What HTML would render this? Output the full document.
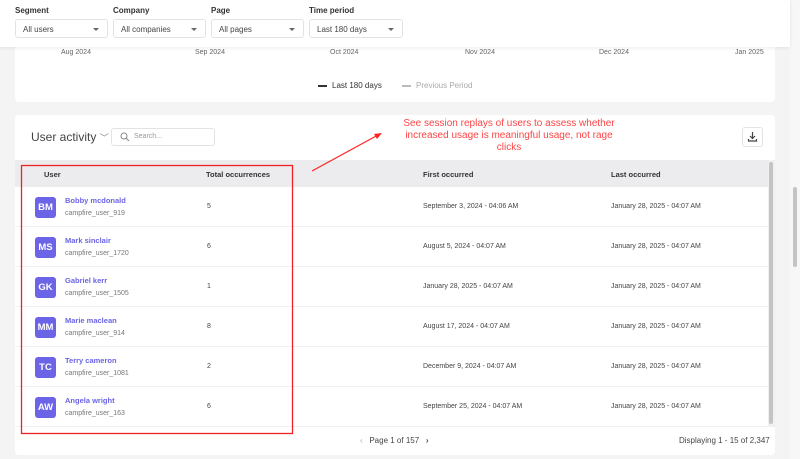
<!DOCTYPE html>
<html><head><style>
*{box-sizing:border-box;margin:0;padding:0}
body{width:800px;height:459px;overflow:hidden;background:#f4f4f5;font-family:"Liberation Sans",sans-serif;color:#333;position:relative}
.top{position:absolute;left:0;top:0;width:790px;height:47px;background:#fff;box-shadow:0 1px 4px rgba(0,0,0,.08);z-index:2}
.lbl{position:absolute;top:6px;font-size:8px;font-weight:bold;color:#333}
.sel{position:absolute;top:19px;height:19px;border:1px solid #e3e3e3;border-radius:3px;font-size:8px;padding:5px 7px;color:#444;background:#fff}
.sel:after{content:"";position:absolute;right:8px;top:8px;border:3px solid transparent;border-top-color:#666}
.card{position:absolute;background:#fff;border-radius:4px}
.ax{position:absolute;top:49px;font-size:7px;color:#666}
.leg{position:absolute;top:81px;font-size:8px}
.th{position:absolute;top:160px;left:15px;width:753px;height:27px;background:#ececee}
.h{position:absolute;top:170px;font-size:7.5px;font-weight:bold;color:#333}
.row{position:absolute;left:15px;width:753px;height:40px;border-bottom:1px solid #f0f0f0}
.av{position:absolute;left:20px;top:10px;width:21px;height:21px;background:#6b64e6;border-radius:3px;color:#fff;font-size:9.5px;font-weight:bold;text-align:center;line-height:21px}
.nm{position:absolute;left:50px;top:9px;font-size:7.5px;font-weight:bold;color:#6b64e6}
.id{position:absolute;left:50px;top:23px;font-size:7px;color:#777}
.c{position:absolute;top:16px;font-size:7px;color:#444}
</style></head><body>
<div class="top">
<div class="lbl" style="left:15px">Segment</div><div class="sel" style="left:15px;width:93px">All users</div>
<div class="lbl" style="left:113px">Company</div><div class="sel" style="left:113px;width:93px">All companies</div>
<div class="lbl" style="left:211px">Page</div><div class="sel" style="left:211px;width:93px">All pages</div>
<div class="lbl" style="left:309px">Time period</div><div class="sel" style="left:309px;width:94px">Last 180 days</div>
</div>
<div class="card" style="left:15px;top:30px;width:760px;height:72px"></div>
<div class="ax" style="left:61px">Aug 2024</div><div class="ax" style="left:195px">Sep 2024</div><div class="ax" style="left:330px">Oct 2024</div><div class="ax" style="left:465px">Nov 2024</div><div class="ax" style="left:599px">Dec 2024</div><div class="ax" style="left:735px">Jan 2025</div>
<div class="leg" style="left:318px;color:#333"><span style="display:inline-block;width:9px;height:2px;background:#333;vertical-align:middle;margin-right:5px"></span>Last 180 days</div>
<div class="leg" style="left:402px;color:#aaa"><span style="display:inline-block;width:9px;border-top:2px dashed #bbb;vertical-align:middle;margin-right:5px"></span>Previous Period</div>
<div class="card" style="left:15px;top:115px;width:760px;height:340px"></div>
<div style="position:absolute;left:31px;top:130px;font-size:12px;color:#444">User activity <span style="font-size:9px;color:#888">﹀</span></div>
<div style="position:absolute;left:111px;top:128px;width:104px;height:18px;border:1px solid #e3e3e3;border-radius:3px;font-size:7px;color:#999;padding:4px 0 0 22px">Search...
<svg style="position:absolute;left:8px;top:3px" width="10" height="10" viewBox="0 0 10 10"><circle cx="4" cy="4" r="3" fill="none" stroke="#888" stroke-width="1"/><path d="M6.2 6.2L9 9" stroke="#888" stroke-width="1"/></svg></div>
<div style="position:absolute;left:742px;top:127px;width:21px;height:20px;border:1px solid #e3e3e3;border-radius:3px">
<svg width="19" height="18" viewBox="0 0 19 18"><path d="M9.5 4v6M7 8l2.5 2.5L12 8M5.5 11v2h8v-2" fill="none" stroke="#444" stroke-width="1.2"/></svg></div>
<div style="position:absolute;left:395px;top:118px;width:228px;text-align:center;font-size:10px;line-height:12px;color:#f44">See session replays of users to assess whether increased usage is meaningful usage, not rage clicks</div>
<div class="th"></div>
<div class="h" style="left:44px">User</div><div class="h" style="left:206px">Total occurrences</div><div class="h" style="left:423px">First occurred</div><div class="h" style="left:611px">Last occurred</div>
<div class="row" style="top:187px"><div class="av">BM</div><div class="nm">Bobby mcdonald</div><div class="id">campfire_user_919</div><div class="c" style="left:192px">5</div><div class="c" style="left:408px">September 3, 2024 - 04:06 AM</div><div class="c" style="left:596px">January 28, 2025 - 04:07 AM</div></div>
<div class="row" style="top:227px"><div class="av">MS</div><div class="nm">Mark sinclair</div><div class="id">campfire_user_1720</div><div class="c" style="left:192px">6</div><div class="c" style="left:408px">August 5, 2024 - 04:07 AM</div><div class="c" style="left:596px">January 28, 2025 - 04:07 AM</div></div>
<div class="row" style="top:267px"><div class="av">GK</div><div class="nm">Gabriel kerr</div><div class="id">campfire_user_1505</div><div class="c" style="left:192px">1</div><div class="c" style="left:408px">January 28, 2025 - 04:07 AM</div><div class="c" style="left:596px">January 28, 2025 - 04:07 AM</div></div>
<div class="row" style="top:307px"><div class="av">MM</div><div class="nm">Marie maclean</div><div class="id">campfire_user_914</div><div class="c" style="left:192px">8</div><div class="c" style="left:408px">August 17, 2024 - 04:07 AM</div><div class="c" style="left:596px">January 28, 2025 - 04:07 AM</div></div>
<div class="row" style="top:347px"><div class="av">TC</div><div class="nm">Terry cameron</div><div class="id">campfire_user_1081</div><div class="c" style="left:192px">2</div><div class="c" style="left:408px">December 9, 2024 - 04:07 AM</div><div class="c" style="left:596px">January 28, 2025 - 04:07 AM</div></div>
<div class="row" style="top:387px"><div class="av">AW</div><div class="nm">Angela wright</div><div class="id">campfire_user_163</div><div class="c" style="left:192px">6</div><div class="c" style="left:408px">September 25, 2024 - 04:07 AM</div><div class="c" style="left:596px">January 28, 2025 - 04:07 AM</div></div>
<div style="position:absolute;left:768px;top:160px;width:7px;height:267px;background:#f0f0f0"><div style="position:absolute;left:1px;top:2px;width:4px;height:262px;background:#c4c4c4;border-radius:2px"></div></div>
<div style="position:absolute;left:360px;top:436px;font-size:8px;color:#444"><span style="color:#aaa">‹</span>&nbsp;&nbsp; Page 1 of 157 &nbsp;&nbsp;<b>›</b></div>
<div style="position:absolute;left:679px;top:436px;font-size:8px;color:#444">Displaying 1 - 15 of 2,347</div>
<div style="position:absolute;left:790px;top:0;width:10px;height:459px;background:#f7f7f7"><div style="position:absolute;left:3px;top:187px;width:4px;height:80px;background:#c4c4c4;border-radius:2px"></div></div>
<svg style="position:absolute;left:0;top:0;z-index:5" width="800" height="459"><path d="M312 171L378 135" stroke="#f22" stroke-width="1.2"/><path d="M382 133l-8 1 3 5z" fill="#f22"/><rect x="21.5" y="165.5" width="271" height="268" fill="none" stroke="#e22" stroke-width="1.3"/></svg>
</body></html>
